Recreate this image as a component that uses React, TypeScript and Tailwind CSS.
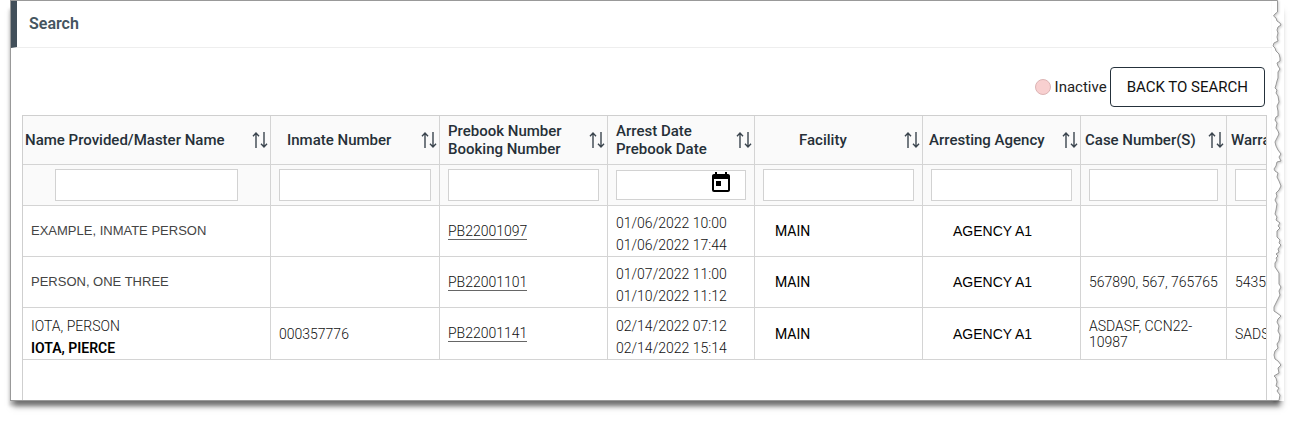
import { MdToday } from "react-icons/md";

const columns = [
  { title: ["Name Provided/Master Name"], width: "w-[248px]", pad: "pl-0.5", filterPad: "px-8" },
  { title: ["Inmate Number"], width: "w-[169px]", pad: "pl-4", filterPad: "px-2" },
  { title: ["Prebook Number", "Booking Number"], width: "w-[168px]", pad: "pl-2", filterPad: "px-2" },
  { title: ["Arrest Date", "Prebook Date"], width: "w-[147px]", pad: "pl-2", filterPad: "px-2", date: true },
  { title: ["Facility"], width: "w-[168px]", pad: "pl-11", filterPad: "px-2" },
  { title: ["Arresting Agency"], width: "w-[158px]", pad: "pl-1.5", filterPad: "px-2" },
  { title: ["Case Number(S)"], width: "w-[146px]", pad: "pl-1", filterPad: "px-2" },
  { title: ["Warrant"], width: "w-[168px]", pad: "pl-1", filterPad: "px-2" },
];

const rows = [
  {
    name: "EXAMPLE, INMATE PERSON",
    master: "",
    inmate: "",
    prebook: "PB22001097",
    dates: ["01/06/2022 10:00", "01/06/2022 17:44"],
    facility: "MAIN",
    agency: "AGENCY A1",
    cases: "",
    warrants: "",
  },
  {
    name: "PERSON, ONE THREE",
    master: "",
    inmate: "",
    prebook: "PB22001101",
    dates: ["01/07/2022 11:00", "01/10/2022 11:12"],
    facility: "MAIN",
    agency: "AGENCY A1",
    cases: "567890, 567, 765765",
    warrants: "5435",
  },
  {
    name: "IOTA, PERSON",
    master: "IOTA, PIERCE",
    inmate: "000357776",
    prebook: "PB22001141",
    dates: ["02/14/2022 07:12", "02/14/2022 15:14"],
    facility: "MAIN",
    agency: "AGENCY A1",
    cases: "ASDASF, CCN22-10987",
    warrants: "SADS",
  },
];

const tear =
  "5.5,0.5 5.5,12 3,14 1.5,16 4,18 5,21 8,23 9,25 6,27 5,30 6,33 5,37 6,41 2,43 1,46 3,48 4,51 7,54 8,58 8,61 5,63 6,66 8,69 6,72 6,78 5,81 4,85 3,88 5,90 4,93 6,96 7,102 5,106 6,111 6,116 4,117 3,120 5,123 4,128 6,131 7,134 5,138 3,142 4,146 6,150 9,154 7,157 9,161 5,162 4,166 2,169 3,171 6,173 5,177 7,181 9,186 7,190 4,193 5,196 3,200 5,204 4,210 3,214 5,217 4,220 8,223 6,226 8,228 5,231 5,237 8,240 7,243 9,245 6,249 7,252 4,254 6,256 4,258 5,260 3,263 3,267 5,270 7,273 7,284 9,287 7,291 8,295 6,299 4,303 2,307 2,311 5,313 9,316 6,319 5,322 7,326 6,331 8,335 7,341 5,344 6,348 3,351 2,355 3,359 6,361 9,365 6,368 7,373 2,376 4,378 5,382 4,386 7,388 5,391 8,395 7,400.5";

function SortIcon() {
  return (
    <svg viewBox="0 0 16 18" className="h-[18px] w-4" fill="none" stroke="#3b454e" strokeWidth="1.4">
      <path d="M4 17V2M1 5.2L4 2l3 3.2" />
      <path d="M12 1v15M9 12.8l3 3.2 3-3.2" />
    </svg>
  );
}

export default function App() {
  return (
    <main className="bg-white pr-2 pb-5 pl-2.5 font-[Roboto,sans-serif] text-[#3b3b3b]">
      <div className="flex items-stretch shadow-[0_8px_6px_-3px_rgba(0,0,0,0.5),-3px_7px_3px_-2px_rgba(0,0,0,0.15)]">
        <div className="flex min-h-[401px] min-w-0 flex-1 flex-col border-t border-b border-l border-[#999] bg-white">
          <header className="flex h-[47px] items-center border-b border-l-6 border-b-[#eee] border-l-[#424f5a] pl-3">
            <h1 className="text-base font-semibold text-[#455560]">Search</h1>
          </header>

          {/* Toolbar */}
          <div className="flex items-center justify-end gap-[3px] pt-[19px] pr-[7px] pb-2">
            <span className="flex items-center gap-1 text-[15px] text-[#222]">
              <span className="size-4 rounded-full border border-[#dcb4b4] bg-[#f8d0d0]" />
              Inactive
            </span>
            <button
              type="button"
              className="h-10 rounded border border-[#25313b] px-4 text-[15px] text-[#111]"
            >
              BACK TO SEARCH
            </button>
          </div>

          {/* Results */}
          <div className="mr-[5px] ml-[11px] flex-1 overflow-hidden border-t border-r border-l border-[#cfcfcf]">
            <table className="w-[1372px] table-fixed border-separate border-spacing-0 text-left">
              <thead className="bg-[#fafafa]">
                <tr className="h-[49px]">
                  {columns.map((col) => (
                    <th
                      key={col.title[0]}
                      scope="col"
                      className={`${col.width} ${col.pad} border-r border-b border-[#d4d4d4] pr-0.5`}
                    >
                      <div className="flex items-center justify-between">
                        <span className="text-[15px] leading-[18px] font-medium whitespace-nowrap text-[#263038]">
                          {col.title.map((line) => (
                            <span key={line} className="block">
                              {line}
                            </span>
                          ))}
                        </span>
                        <button type="button" aria-label={`Sort by ${col.title[0]}`}>
                          <SortIcon />
                        </button>
                      </div>
                    </th>
                  ))}
                </tr>
                <tr className="h-[41px]">
                  {columns.map((col) => (
                    <td key={col.title[0]} className={`${col.filterPad} border-r border-b border-[#d4d4d4]`}>
                      {col.date ? (
                        <div className="flex h-[30px] border border-[#d2d2d2] bg-white pr-3">
                          <input
                            type="text"
                            aria-label={`Filter ${col.title[0]}`}
                            className="w-full min-w-0 px-1 text-sm outline-none"
                          />
                          <button type="button" aria-label="Choose date" className="h-6">
                            <MdToday size={24} color="#000" />
                          </button>
                        </div>
                      ) : (
                        <input
                          type="text"
                          aria-label={`Filter ${col.title[0]}`}
                          className="block h-8 w-full border border-[#d2d2d2] bg-white px-1 text-sm outline-none"
                        />
                      )}
                    </td>
                  ))}
                </tr>
              </thead>
              <tbody className="text-sm leading-4 font-light text-[#111] [&_td]:border-r [&_td]:border-b [&_td]:border-[#d4d4d4] [&_td]:px-2">
                {rows.map((row) => (
                  <tr key={row.prebook} className="h-[51px] last:h-[52px]">
                    <td>
                      {row.master ? (
                        <div className="pt-1.5">
                          <p className="leading-[22px]">{row.name}</p>
                          <p className="leading-[22px] font-semibold text-black">{row.master}</p>
                        </div>
                      ) : (
                        <p className="font-['Liberation_Sans',sans-serif] text-[13px] text-[#444]">{row.name}</p>
                      )}
                    </td>
                    <td>{row.inmate}</td>
                    <td>
                      <a href="#" className="inline-block border-b border-[#666]">
                        {row.prebook}
                      </a>
                    </td>
                    <td>
                      <div className="pt-1.5">
                        {row.dates.map((d) => (
                          <p key={d} className="leading-[22px]">
                            {d}
                          </p>
                        ))}
                      </div>
                    </td>
                    <td>
                      <p className="pl-3 font-normal text-black">{row.facility}</p>
                    </td>
                    <td>
                      <p className="pl-[22px] font-['Liberation_Sans',sans-serif] text-black">{row.agency}</p>
                    </td>
                    <td>{row.cases}</td>
                    <td>{row.warrants}</td>
                  </tr>
                ))}
              </tbody>
            </table>
          </div>
        </div>

        {/* Torn edge */}
        <svg
          viewBox="0 0 12 401"
          preserveAspectRatio="none"
          className="w-3 shrink-0 drop-shadow-[1px_1px_1px_rgba(0,0,0,0.2)]"
          aria-hidden="true"
        >
          <polygon points={`0,0 ${tear} 0,401`} fill="#fff" />
          <polyline points={`0,0.5 ${tear} 0,400.5`} fill="none" stroke="#999" />
        </svg>
      </div>
    </main>
  );
}
